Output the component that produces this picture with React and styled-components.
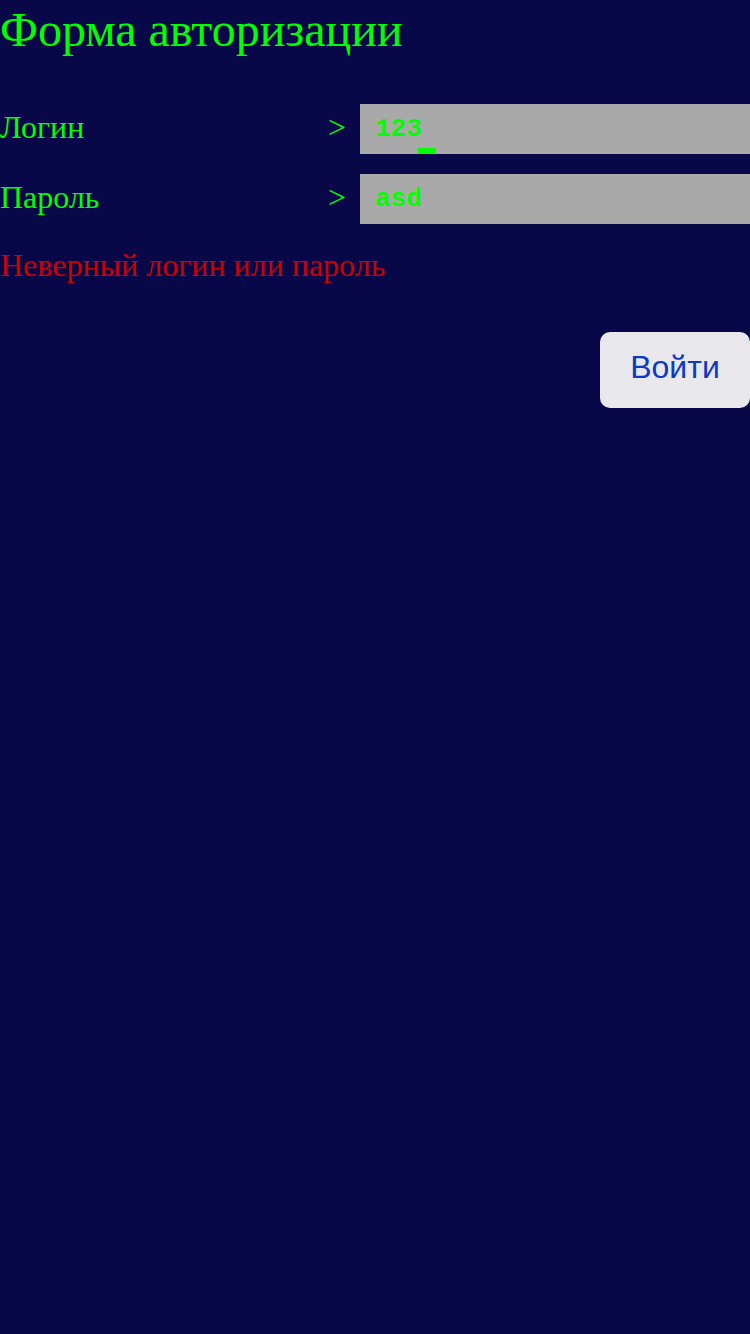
import React from "react";
import styled, { createGlobalStyle } from "styled-components";

const Global = createGlobalStyle`
  html, body { margin: 0; padding: 0; background: #080848; }
  body { font-family: "Liberation Serif", serif; }
  #root { min-height: 1334px; background: #080848; }
`;

const Page = styled.div`
  width: 750px;
  min-height: 1334px;
  background: #080848;
  display: flex;
  flex-direction: column;
`;

const Title = styled.h1`
  margin: 0;
  font-family: "Liberation Serif", serif;
  font-weight: normal;
  font-size: 48px;
  line-height: 60px;
  color: #00ff00;
`;

const Form = styled.div`
  display: flex;
  flex-direction: column;
  gap: 20px;
  margin-top: 44px;
`;

const Row = styled.div`
  display: flex;
  align-items: center;
  height: 50px;
`;

const Label = styled.div`
  flex: 0 0 328px;
  padding-bottom: 4px;
  font-family: "Liberation Serif", serif;
  font-size: 32px;
  color: #00ff00;
`;

const Arrow = styled.div`
  flex: 0 0 32px;
  padding-bottom: 4px;
  font-family: "Liberation Serif", serif;
  font-size: 32px;
  color: #00ff00;
`;

const Field = styled.div`
  position: relative;
  flex: 1;
  height: 50px;
  background: #a9a9a9;
  display: flex;
  align-items: center;
  padding-left: 15px;
  box-sizing: border-box;
  font-family: "Liberation Mono", monospace;
  font-weight: bold;
  font-size: 26px;
  color: #00ff00;
`;

const Caret = styled.span`
  position: absolute;
  left: 58px;
  bottom: 0;
  width: 18px;
  height: 6px;
  background: #00ff00;
`;

const Error = styled.div`
  margin-top: 20px;
  font-family: "Liberation Serif", serif;
  font-size: 32px;
  line-height: 42px;
  color: #cc0000;
`;

const Actions = styled.div`
  display: flex;
  justify-content: flex-end;
  margin-top: 46px;
`;

const Button = styled.button`
  width: 150px;
  height: 76px;
  border: none;
  border-radius: 10px;
  background: #e8e8ec;
  color: #0b3ac4;
  font-family: "Liberation Sans", Arial, sans-serif;
  font-size: 32px;
  padding: 0 0 6px 0;
`;

export default function App() {
  return (
    <>
      <Global />
      <Page>
        <Title>Форма авторизации</Title>
        <Form>
          <Row>
            <Label>Логин</Label>
            <Arrow>&gt;</Arrow>
            <Field>
              123
              <Caret />
            </Field>
          </Row>
          <Row>
            <Label>Пароль</Label>
            <Arrow>&gt;</Arrow>
            <Field>asd</Field>
          </Row>
        </Form>
        <Error>Неверный логин или пароль</Error>
        <Actions>
          <Button>Войти</Button>
        </Actions>
      </Page>
    </>
  );
}
